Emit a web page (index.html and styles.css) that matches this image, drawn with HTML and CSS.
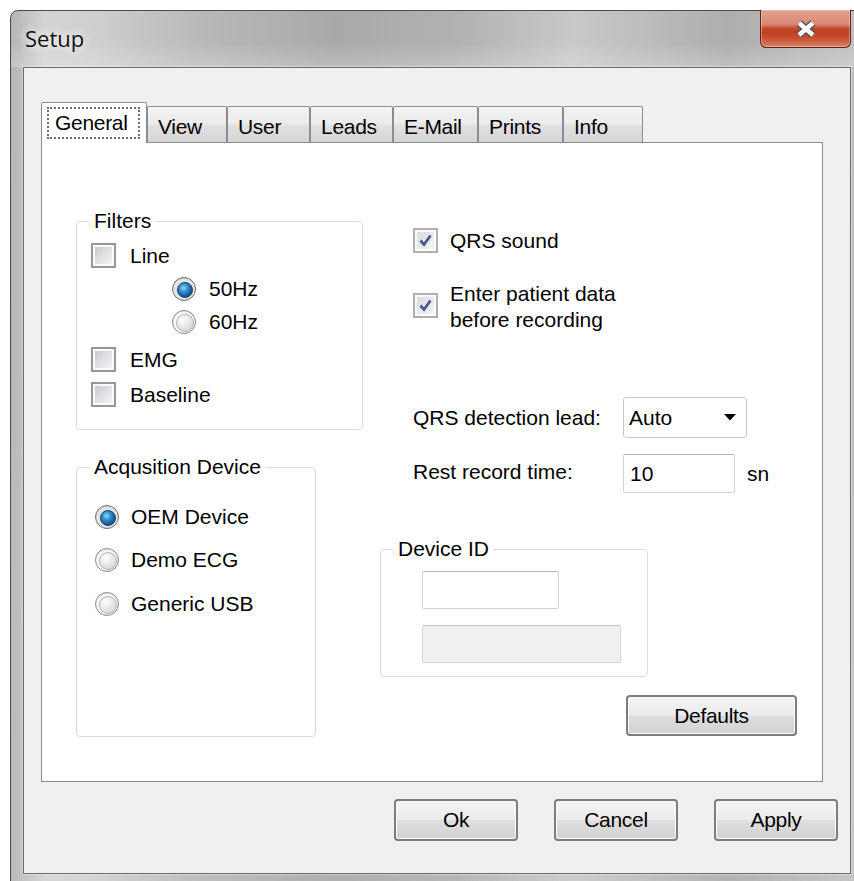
FILE: index.html
```html
<!DOCTYPE html>
<html lang="en">
<head>
<meta charset="utf-8">
<title>Setup</title>
<link rel="stylesheet" href="styles.css">
</head>
<body>
<div class="window">
  <div class="titlebar">
    <span class="title">Setup</span>
    <div class="close" role="button" aria-label="Close">
      <svg width="22" height="18" viewBox="0 0 22 18">
        <path d="M4 3 L18 15 M18 3 L4 15" stroke="#525252" stroke-width="7.5" fill="none"/>
        <path d="M4 3 L18 15 M18 3 L4 15" stroke="#ffffff" stroke-width="4.5" fill="none"/>
      </svg>
    </div>
  </div>

  <div class="client">
    <div class="tabs">
      <div class="tab active w-general"><span class="focus">General</span></div>
      <div class="tab w-view">View</div>
      <div class="tab w-user">User</div>
      <div class="tab w-leads">Leads</div>
      <div class="tab w-mail">E-Mail</div>
      <div class="tab w-prints">Prints</div>
      <div class="tab w-info">Info</div>
    </div>

    <div class="page">
      <div class="col-left">
        <fieldset class="group filters">
          <legend>Filters</legend>
          <div class="group-body filters-body">
            <div class="row"><span class="cb"></span><span>Line</span></div>
            <div class="row sub"><span class="rb on"></span><span>50Hz</span></div>
            <div class="row sub"><span class="rb"></span><span>60Hz</span></div>
            <div class="row emg"><span class="cb"></span><span>EMG</span></div>
            <div class="row base"><span class="cb"></span><span>Baseline</span></div>
          </div>
        </fieldset>

        <fieldset class="group acq">
          <legend>Acqusition Device</legend>
          <div class="group-body acq-body">
            <div class="row tall"><span class="rb on"></span><span>OEM Device</span></div>
            <div class="row tall"><span class="rb"></span><span>Demo ECG</span></div>
            <div class="row tall"><span class="rb"></span><span>Generic USB</span></div>
          </div>
        </fieldset>
      </div>

      <div class="col-right">
        <div class="row opt qrs"><span class="cb checked"><svg viewBox="0 0 17 17"><path d="M3.5 8.5 L7 12.5 L13.5 3.5" stroke="#4b5c8c" stroke-width="2.8" fill="none"/></svg></span><span>QRS sound</span></div>
        <div class="row opt patient"><span class="cb checked"><svg viewBox="0 0 17 17"><path d="M3.5 8.5 L7 12.5 L13.5 3.5" stroke="#4b5c8c" stroke-width="2.8" fill="none"/></svg></span><span class="two-line">Enter patient data<br>before recording</span></div>

        <div class="field detect">
          <span class="field-label">QRS detection lead:</span>
          <div class="combo"><span>Auto</span><svg width="12" height="7" viewBox="0 0 12 7"><path d="M0 0 H12 L6 6.5 Z" fill="#000"/></svg></div>
        </div>
        <div class="field rest">
          <span class="field-label">Rest record time:</span>
          <div class="textbox time">10</div>
          <span class="unit">sn</span>
        </div>

        <fieldset class="group device">
          <legend>Device ID</legend>
          <div class="group-body device-body">
            <div class="textbox id-short"></div>
            <div class="textbox id-long disabled"></div>
          </div>
        </fieldset>

        <button class="btn defaults" type="button">Defaults</button>
      </div>
    </div>

    <div class="buttons">
      <button class="btn" type="button">Ok</button>
      <button class="btn" type="button">Cancel</button>
      <button class="btn" type="button">Apply</button>
    </div>
  </div>
</div>
</body>
</html>
```

FILE: styles.css
```css
* {
  box-sizing: border-box;
}

html,
body {
  margin: 0;
  padding: 0;
}

body {
  width: 854px;
  height: 881px;
  overflow: hidden;
  background: #ffffff;
  font-family: "Liberation Sans", Arial, sans-serif;
  font-size: 21px;
  color: #000;
}

/* ---------- window frame ---------- */
.window {
  margin: 10px 0 0 10px;
  width: 854px;
  height: 880px;
  border: 1px solid #4a4a4a;
  border-radius: 8px 8px 0 0;
  padding: 0 12px 8px 12px;
  background:
    linear-gradient(180deg, rgba(255, 255, 255, 0) 0%, rgba(255, 255, 255, 0) 70px, rgba(255, 255, 255, 0.08) 100%),
    linear-gradient(90deg, #b4b4b4 0%, #d4d4d4 4%, #cfcfcf 10%, #b9b9b9 22%, #a9a9a9 38%, #b1b1b1 52%, #c9c9c9 66%, #bdbdbd 74%, #aeaeae 84%, #c2c2c2 100%);
  display: flex;
  flex-direction: column;
}

.titlebar {
  height: 56px;
  display: flex;
  align-items: flex-start;
  background: linear-gradient(180deg, rgba(255, 255, 255, 0) 55%, rgba(255, 255, 255, 0.22) 100%);
  margin: 0 -12px;
  padding: 0 12px;
}

.title {
  margin: 12px 0 0 2px;
  font-family: "Open Sans", "Noto Sans", sans-serif;
  font-size: 22px;
  line-height: 30px;
  color: #111;
  text-shadow: 0 0 8px rgba(255, 255, 255, 0.95), 0 0 14px rgba(255, 255, 255, 0.8);
}

.close {
  margin: -1px 0 0 auto;
  width: 91px;
  height: 38px;
  border: 1px solid #5c2417;
  border-top: none;
  border-radius: 0 0 6px 6px;
  background: linear-gradient(180deg, #e2a08f 0%, #d98a75 38%, #c5472b 50%, #c03f21 62%, #cb5a3b 82%, #d8876e 100%);
  box-shadow: inset 0 0 0 1px rgba(255, 220, 210, 0.45);
  display: flex;
  align-items: center;
  justify-content: center;
}

.close svg {
  display: block;
}

/* ---------- client area ---------- */
.client {
  height: 807px;
  border: 1px solid #6a6a6a;
  box-shadow: 0 0 0 1px rgba(255, 255, 255, 0.35);
  background: #f0f0f0;
  display: flex;
  flex-direction: column;
}

/* ---------- tab strip ---------- */
.tabs {
  margin: 34px 0 0 17px;
  height: 40px;
  display: flex;
  align-items: flex-end;
}

.tab {
  height: 36px;
  border: 1px solid #898c95;
  border-bottom: none;
  border-radius: 2px 2px 0 0;
  background: linear-gradient(180deg, #f3f3f3 0%, #ececec 45%, #e0e0e0 55%, #d6d6d6 100%);
  padding: 7px 0 0 10px;
  line-height: 26px;
  letter-spacing: -0.3px;
}

.tab.active {
  height: 41px;
  margin-bottom: -1px;
  position: relative;
  z-index: 1;
  background: #ffffff;
  padding: 4px 0 0 5px;
}

.focus {
  display: inline-block;
  border: 2px dotted #6d6d6d;
  padding: 1px 10px 1px 6px;
  line-height: 26px;
}

.w-general { width: 106px; }
.w-view { width: 80px; }
.w-user { width: 83px; }
.w-leads { width: 83px; }
.w-mail { width: 85px; }
.w-prints { width: 85px; }
.w-info { width: 80px; }

/* ---------- tab page ---------- */
.page {
  margin-left: 17px;
  width: 782px;
  height: 640px;
  border: 1px solid #898c95;
  background: #ffffff;
  padding: 65px 0 0 34px;
  display: grid;
  grid-template-columns: 287px 1fr;
  column-gap: 17px;
  align-items: start;
}

/* ---------- group boxes ---------- */
.group {
  margin: 0;
  padding: 0;
  min-width: 0;
  border: 1px solid #d5dfe5;
  border-radius: 4px;
}

.group legend {
  margin-left: 13px;
  padding: 0 4px;
  line-height: 26px;
}

.filters {
  width: 287px;
  height: 222px;
}

.filters-body {
  padding: 5px 0 0 14px;
}

.acq {
  margin-top: 24px;
  width: 240px;
  height: 283px;
}

.acq-body {
  padding: 15px 0 0 18px;
}

/* ---------- rows with check/radio ---------- */
.row {
  height: 33px;
  display: flex;
  align-items: center;
  gap: 14px;
  line-height: 26px;
}

.row.sub {
  margin-left: 81px;
  gap: 13px;
}

.row.emg {
  margin-top: 5px;
}

.row.base {
  margin-top: 2px;
}

.row.tall {
  height: 43.5px;
  gap: 12px;
}

.cb {
  flex: none;
  width: 25px;
  height: 25px;
  border: 2px solid #979797;
  padding: 2px;
  background: linear-gradient(135deg, #c6cacf 0%, #dedfe1 45%, #f4f4f4 100%) content-box, #fbfbfb;
  display: flex;
}

.cb.checked {
  border-color: #b0b0b0;
  background: linear-gradient(135deg, #d9dbde 0%, #e8e8e9 50%, #f5f5f5 100%) content-box, #fbfbfb;
}

.cb svg {
  width: 100%;
  height: 100%;
  display: block;
}

.rb {
  flex: none;
  width: 24px;
  height: 24px;
  border-radius: 50%;
  border: 1px solid #8b8b8b;
  background: #f6f6f6;
  padding: 3px;
  box-shadow: inset 0 1px 1px rgba(0, 0, 0, 0.08);
}

.rb::before {
  content: "";
  display: block;
  width: 100%;
  height: 100%;
  border-radius: 50%;
  border: 1px solid #b5b5b5;
  background: radial-gradient(circle at 35% 30%, #ffffff 0%, #e8e8e8 45%, #cdcdcd 100%);
}

.rb.on {
  border-color: #6f6f6f;
  background: #e4e4e4;
  padding: 4px;
}

.rb.on::before {
  border-color: #1e3f5e;
  background: radial-gradient(circle at 40% 35%, #9adcfb 0%, #3a9ad8 28%, #14629e 60%, #0c3c68 100%);
}

/* ---------- right column ---------- */
.col-right {
  display: flex;
  flex-direction: column;
  align-items: flex-start;
}

.row.opt {
  margin-left: 33px;
  gap: 12px;
}

.row.qrs {
  margin-top: 16px;
}

.row.patient {
  margin-top: 22px;
  height: 52px;
}

.two-line {
  line-height: 26px;
  padding-top: 4px;
}

.field {
  margin-left: 33px;
  display: flex;
  align-items: center;
}

.field-label {
  width: 210px;
}

.field.detect {
  margin-top: 66px;
}

.field.rest {
  margin-top: 16px;
}

.field.rest .field-label {
  margin-top: -4px;
}

.combo {
  width: 124px;
  height: 41px;
  border: 1px solid #c9c9c9;
  border-radius: 3px;
  background: #ffffff;
  display: flex;
  align-items: center;
  justify-content: space-between;
  padding: 0 10px 0 5px;
}

.textbox {
  border: 1px solid #d0d3d8;
  border-top-color: #b1b4ba;
  border-radius: 2px;
  background: #ffffff;
  display: flex;
  align-items: center;
}

.textbox.time {
  width: 112px;
  height: 39px;
  padding-left: 6px;
}

.unit {
  margin-left: 12px;
}

.device {
  margin-top: 43px;
  width: 268px;
  height: 141px;
}

.device-body {
  padding: 9px 0 0 41px;
  display: flex;
  flex-direction: column;
  gap: 16px;
}

.id-short {
  width: 137px;
  height: 38px;
}

.id-long {
  width: 199px;
  height: 38px;
}

.textbox.disabled {
  background: #f0f0f0;
  border-color: #d6d6d6;
  border-top-color: #c2c2c2;
}

/* ---------- push buttons ---------- */
.btn {
  width: 124px;
  height: 42px;
  border: 2px solid #7d7d7d;
  border-radius: 4px;
  background: linear-gradient(180deg, #f3f3f3 0%, #ececec 48%, #dedede 52%, #d2d2d2 100%);
  box-shadow: inset 0 0 0 1px #fbfbfb;
  font-family: "Liberation Sans", Arial, sans-serif;
  font-size: 21px;
  color: #000;
  padding: 0;
  letter-spacing: -0.3px;
}

.btn.defaults {
  margin: 18px 0 0 246px;
  width: 171px;
  height: 41px;
}

.buttons {
  margin-top: 17px;
  padding-right: 12px;
  display: flex;
  justify-content: flex-end;
  gap: 36px;
}
```
